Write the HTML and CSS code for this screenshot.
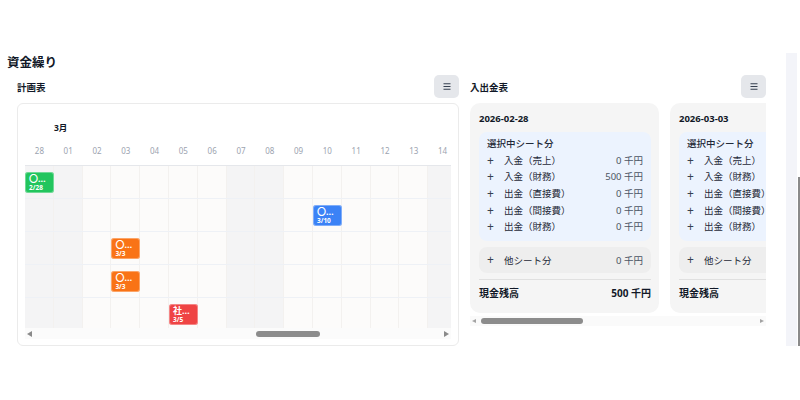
FILE: index.html
```html
<!DOCTYPE html>
<html lang="ja">
<head>
<meta charset="utf-8">
<title>資金繰り</title>
<link rel="stylesheet" href="styles.css">
</head>
<body>
<div class="root">
  <main class="main">
    <h1 class="title">資金繰り</h1>
    <div class="panels">
      <section class="panel plan">
        <div class="panel-head">
          <h2 class="panel-title">計画表</h2>
          <button class="menu-btn" type="button"><svg width="8" height="7" viewBox="0 0 8 7"><path d="M0.5 0.75H7.5M0.5 3.5H7.5M0.5 6.25H7.5" stroke="#374151" stroke-width="1.1"/></svg></button>
        </div>
        <div class="cal-card">
          <div class="cal-view">
            <div class="month-row"><span class="month">3月</span></div>
            <div class="days">
              <span>28</span><span>01</span><span>02</span><span>03</span><span>04</span><span>05</span><span>06</span><span>07</span><span>08</span><span>09</span><span>10</span><span>11</span><span>12</span><span>13</span><span>14</span>
            </div>
            <div class="rows">
              <div class="row">
                <div class="cell we"><div class="chip green"><b>〇…</b><small>2/28</small></div></div><div class="cell we"></div><div class="cell"></div><div class="cell"></div><div class="cell"></div><div class="cell"></div><div class="cell"></div><div class="cell we"></div><div class="cell we"></div><div class="cell"></div><div class="cell"></div><div class="cell"></div><div class="cell"></div><div class="cell"></div><div class="cell we"></div>
              </div>
              <div class="row">
                <div class="cell we"></div><div class="cell we"></div><div class="cell"></div><div class="cell"></div><div class="cell"></div><div class="cell"></div><div class="cell"></div><div class="cell we"></div><div class="cell we"></div><div class="cell"></div><div class="cell"><div class="chip blue"><b>〇…</b><small>3/10</small></div></div><div class="cell"></div><div class="cell"></div><div class="cell"></div><div class="cell we"></div>
              </div>
              <div class="row">
                <div class="cell we"></div><div class="cell we"></div><div class="cell"></div><div class="cell"><div class="chip orange"><b>〇…</b><small>3/3</small></div></div><div class="cell"></div><div class="cell"></div><div class="cell"></div><div class="cell we"></div><div class="cell we"></div><div class="cell"></div><div class="cell"></div><div class="cell"></div><div class="cell"></div><div class="cell"></div><div class="cell we"></div>
              </div>
              <div class="row">
                <div class="cell we"></div><div class="cell we"></div><div class="cell"></div><div class="cell"><div class="chip orange"><b>〇…</b><small>3/3</small></div></div><div class="cell"></div><div class="cell"></div><div class="cell"></div><div class="cell we"></div><div class="cell we"></div><div class="cell"></div><div class="cell"></div><div class="cell"></div><div class="cell"></div><div class="cell"></div><div class="cell we"></div>
              </div>
              <div class="row">
                <div class="cell we"></div><div class="cell we"></div><div class="cell"></div><div class="cell"></div><div class="cell"></div><div class="cell"><div class="chip red"><b>社…</b><small>3/5</small></div></div><div class="cell"></div><div class="cell we"></div><div class="cell we"></div><div class="cell"></div><div class="cell"></div><div class="cell"></div><div class="cell"></div><div class="cell"></div><div class="cell we"></div>
              </div>
            </div>
          </div>
          <div class="hscroll">
            <span class="arrow left"></span>
            <div class="track"><div class="thumb plan-thumb"></div></div>
            <span class="arrow right"></span>
          </div>
        </div>
      </section>

      <section class="panel flow">
        <div class="panel-head">
          <h2 class="panel-title">入出金表</h2>
          <button class="menu-btn" type="button"><svg width="8" height="7" viewBox="0 0 8 7"><path d="M0.5 0.75H7.5M0.5 3.5H7.5M0.5 6.25H7.5" stroke="#374151" stroke-width="1.1"/></svg></button>
        </div>
        <div class="flow-view">
          <div class="flow-cards">
            <article class="fcard">
              <div class="fdate">2026-02-28</div>
              <div class="sel-box">
                <div class="sel-title">選択中シート分</div>
                <div class="item"><span class="plus">+</span><span class="lbl">入金（売上）</span><span class="amt">0 千円</span></div>
                <div class="item"><span class="plus">+</span><span class="lbl">入金（財務）</span><span class="amt">500 千円</span></div>
                <div class="item"><span class="plus">+</span><span class="lbl">出金（直接費）</span><span class="amt">0 千円</span></div>
                <div class="item"><span class="plus">+</span><span class="lbl">出金（間接費）</span><span class="amt">0 千円</span></div>
                <div class="item"><span class="plus">+</span><span class="lbl">出金（財務）</span><span class="amt">0 千円</span></div>
              </div>
              <div class="other-box">
                <div class="item"><span class="plus">+</span><span class="lbl">他シート分</span><span class="amt">0 千円</span></div>
              </div>
              <div class="total"><span>現金残高</span><span>500 千円</span></div>
            </article>
            <article class="fcard">
              <div class="fdate">2026-03-03</div>
              <div class="sel-box">
                <div class="sel-title">選択中シート分</div>
                <div class="item"><span class="plus">+</span><span class="lbl">入金（売上）</span><span class="amt">0 千円</span></div>
                <div class="item"><span class="plus">+</span><span class="lbl">入金（財務）</span><span class="amt">0 千円</span></div>
                <div class="item"><span class="plus">+</span><span class="lbl">出金（直接費）</span><span class="amt">0 千円</span></div>
                <div class="item"><span class="plus">+</span><span class="lbl">出金（間接費）</span><span class="amt">0 千円</span></div>
                <div class="item"><span class="plus">+</span><span class="lbl">出金（財務）</span><span class="amt">0 千円</span></div>
              </div>
              <div class="other-box">
                <div class="item"><span class="plus">+</span><span class="lbl">他シート分</span><span class="amt">0 千円</span></div>
              </div>
              <div class="total"><span>現金残高</span><span>500 千円</span></div>
            </article>
          </div>
          <div class="hscroll flow-scroll">
            <span class="arrow left light"></span>
            <div class="track"><div class="thumb flow-thumb"></div></div>
            <span class="arrow right light"></span>
          </div>
        </div>
      </section>
    </div>
  </main>
  <div class="vbar">
    <div class="vtrack"></div>
    <div class="vthumb-col"><div class="vthumb"></div></div>
  </div>
</div>
</body>
</html>
```

FILE: styles.css
```css
* { box-sizing: border-box; }

html, body {
  margin: 0;
  padding: 0;
  background: #ffffff;
}

body {
  font-family: "Noto Sans", "Noto Sans CJK JP", sans-serif;
  color: #1f2937;
}

.root {
  display: flex;
  align-items: flex-start;
  padding-top: 53px;
}

.main {
  width: 786px;
  padding-left: 7px;
  flex-shrink: 0;
}

.title {
  margin: 0 0 3px;
  padding-top: 1px;
  font-size: 12.5px;
  line-height: 18px;
  font-weight: 700;
  color: #111827;
}

.panels {
  display: flex;
  gap: 11px;
  padding-left: 10px;
}

.panel.plan { width: 442px; flex-shrink: 0; }
.panel.flow { width: 296px; flex-shrink: 0; }

.panel-head {
  display: flex;
  align-items: center;
  justify-content: space-between;
  height: 23px;
  margin-bottom: 5px;
}

.panel-title {
  margin: 0;
  font-size: 9.5px;
  font-weight: 700;
  color: #111827;
}

.menu-btn {
  width: 25px;
  height: 23px;
  border: 0;
  padding: 0;
  border-radius: 5px;
  background: #e5e7eb;
  display: flex;
  align-items: center;
  justify-content: center;
}

/* ---------- calendar ---------- */
.cal-card {
  height: 243px;
  border: 1px solid #ebebeb;
  border-radius: 6px;
  padding: 15px 7px 6px;
  background: #fff;
}

.cal-view {
  overflow: hidden;
}

.month-row {
  height: 16px;
  padding-left: 29px;
  display: flex;
  align-items: center;
}

.month {
  font-size: 8.5px;
  font-weight: 700;
  color: #111827;
}

.days {
  display: grid;
  grid-template-columns: repeat(15, 28.8px);
  padding: 8px 0 6px;
  border-bottom: 1px solid #e5e7eb;
  width: 432px;
}

.days span {
  text-align: center;
  font-size: 8px;
  line-height: 16px;
  color: #9ca3af;
}

.rows {
  height: 162px;
  overflow: hidden;
}

.row {
  display: grid;
  grid-template-columns: repeat(15, 28.8px);
  height: 33px;
  border-bottom: 1px solid #eef1f6;
  width: 432px;
}

.cell {
  background: #fcfbfa;
  border-right: 1px solid #f3f1ef;
  padding-top: 6px;
}

.cell.we {
  background: #f4f4f5;
}

.chip {
  width: 29px;
  height: 21px;
  border-radius: 3px;
  padding: 1px 4px 0;
  color: #fff;
  display: flex;
  flex-direction: column;
  overflow: hidden;
  box-shadow: 0 0 0 1px rgba(255, 255, 255, 0.35) inset;
}

.chip b {
  font-size: 9px;
  line-height: 11px;
  font-weight: 700;
  white-space: nowrap;
}

.chip small {
  font-size: 6.5px;
  line-height: 8px;
  font-weight: 700;
}

.chip.green { background: #22c55e; }
.chip.blue { background: #3b82f6; }
.chip.orange { background: #f97316; }
.chip.red { background: #ef4444; }

/* ---------- fake scrollbars ---------- */
.hscroll {
  display: flex;
  align-items: center;
  height: 11px;
  background: #fbfbfb;
}

.arrow {
  width: 0;
  height: 0;
  border-top: 3.5px solid transparent;
  border-bottom: 3.5px solid transparent;
  flex-shrink: 0;
}

.arrow.left {
  border-right: 5px solid #8a8a8a;
  margin-left: 2px;
}

.arrow.right {
  border-left: 5px solid #8a8a8a;
  margin-right: 2px;
}

.arrow.light.left { border-right-color: #a3a3a3; border-right-width: 4px; border-top-width: 2.5px; border-bottom-width: 2.5px; }
.arrow.light.right { border-left-color: #a3a3a3; border-left-width: 4px; border-top-width: 2.5px; border-bottom-width: 2.5px; }

.track {
  flex: 1;
  height: 11px;
  display: flex;
  align-items: center;
}

.thumb {
  height: 6px;
  border-radius: 3px;
  background: #8c8c8c;
}

.plan-thumb {
  width: 64px;
  margin-left: 224px;
}

/* ---------- cash flow ---------- */
.flow-view {
  width: 296px;
  overflow: hidden;
}

.flow-cards {
  display: flex;
  gap: 11px;
}

.fcard {
  width: 189px;
  flex-shrink: 0;
  background: #f5f5f5;
  border-radius: 10px;
  padding: 9px 8px 12px 9px;
  font-size: 9.5px;
}

.fdate {
  font-weight: 700;
  line-height: 14px;
  font-size: 9.5px;
  color: #111827;
}

.sel-box {
  margin-top: 6px;
  background: #ecf3fe;
  border-radius: 8px;
  padding: 4px 8px 5px;
}

.sel-title {
  line-height: 16.7px;
  font-weight: 500;
  color: #1f2937;
}

.item {
  display: flex;
  align-items: center;
  height: 16.7px;
  line-height: 16.7px;
}

.plus {
  width: 17px;
  flex-shrink: 0;
  font-size: 12px;
  line-height: 16.7px;
  color: #374151;
}

.lbl {
  flex: 1;
  white-space: nowrap;
  color: #1f2937;
}

.amt {
  white-space: nowrap;
  color: #4b5563;
  text-align: right;
}

.other-box {
  margin-top: 6px;
  background: #eeeeee;
  border-radius: 8px;
  padding: 4.5px 8px;
}

.other-box .item { height: 17px; line-height: 17px; }

.total {
  margin-top: 6px;
  border-top: 1px solid #e0e0e0;
  padding-top: 5px;
  display: flex;
  justify-content: space-between;
  font-weight: 700;
  font-size: 10px;
  line-height: 16px;
  color: #111827;
}

.flow-scroll {
  margin-top: 3px;
  height: 10px;
  background: #fafafa;
}

.flow-scroll .track { height: 10px; }

.flow-thumb {
  width: 102px;
  margin-left: 5px;
}

/* ---------- right vertical bar ---------- */
.vbar {
  display: flex;
  height: 293px;
}

.vtrack {
  width: 11px;
  height: 100%;
  background: #f3f4f9;
}

.vthumb-col {
  width: 3px;
  padding-left: 1px;
}

.vthumb {
  width: 2px;
  height: 169px;
  margin-top: 124px;
  background: #8a8a8a;
}
```
